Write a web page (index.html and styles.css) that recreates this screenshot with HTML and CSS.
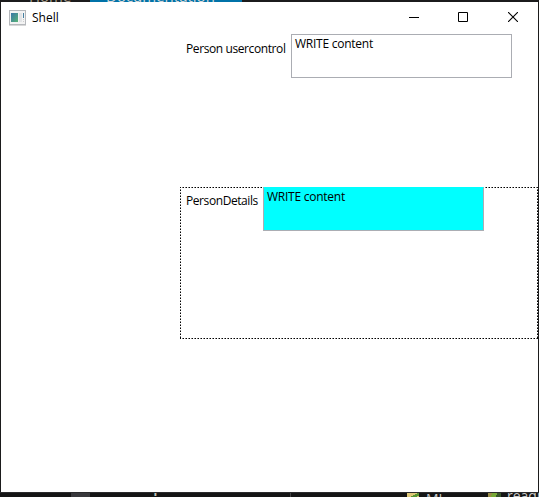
FILE: index.html
```html
<!DOCTYPE html>
<html lang="en">
<head>
<meta charset="utf-8">
<title>Shell</title>
<link rel="stylesheet" href="styles.css">
</head>
<body>
<div class="strip strip-top">
  <span class="nav-home">Home</span>
  <span class="nav-docs">Documentation</span>
</div>
<main class="window">
  <header class="titlebar">
    <svg class="app-icon" width="17" height="16" viewBox="0 0 17 16">
      <defs><linearGradient id="pane" x1="0" y1="0" x2="1" y2="1"><stop offset="0" stop-color="#3976a8"/><stop offset="1" stop-color="#59b477"/></linearGradient></defs>
      <rect x=".5" y=".5" width="16" height="14" fill="#f3f3f3" stroke="#b5b8bc"/>
      <path d="M0 15.5h17" stroke="#d8d8d8"/>
      <rect x="2" y="3" width="7" height="9" fill="url(#pane)"/>
      <rect x="10" y="3" width="3" height="9" fill="#e2e4e6"/>
      <rect x="14" y="3" width="1" height="5" fill="#447fa0"/>
      <path d="M14 9.500h1M14 11.500h1" stroke="#ccc"/>
    </svg>
    <h1 class="title">Shell</h1>
    <div class="controls">
      <svg width="10" height="10" viewBox="0 0 10 10"><path d="M0 5.500h10" stroke="#000"/></svg>
      <svg width="10" height="10" viewBox="0 0 10 10"><path d="M.5.5h9v9h-9z" fill="none" stroke="#000"/></svg>
      <svg width="10" height="10" viewBox="0 0 10 10"><path d="M0 0l10 10M10 0L0 10" stroke="#000" stroke-width="1.1"/></svg>
    </div>
  </header>
  <section class="region person">
    <span class="label label-person">Person usercontrol</span>
    <div class="box"><span class="content">WRITE content</span></div>
  </section>
  <section class="region details">
    <span class="label label-details">PersonDetails</span>
    <div class="box box-cyan"><span class="content">WRITE content</span></div>
  </section>
</main>
<div class="strip strip-bottom">
  <span class="tab"></span>
  <span class="tick"></span>
  <span class="divider"></span>
  <span class="folder"></span>
  <span class="file-ml">ML</span>
  <span class="leaf"></span>
  <span class="file-readme">readme</span>
</div>
</body>
</html>
```
FILE: styles.css
```css
* { box-sizing: border-box; }
body {
  margin: 0;
  width: 539px;
  height: 497px;
  overflow: hidden;
  background: #1b1b1c;
  color: #000;
  font: 12px/16px "Open Sans", "Noto Sans", sans-serif;
}
.strip { display: flex; overflow: hidden; color: #c8c8c8; }
.strip > * { flex: none; }
.strip-top { height: 2px; background: #1b1b1c; font-size: 15px; line-height: 20px; }
.nav-home { width: 61px; margin-left: 29px; margin-top: -14px; color: #aaa08f; }
.nav-docs { width: 152px; height: 20px; margin-top: -14px; padding-left: 16px; background: #0072a8; color: #d8d8d8; }
.window {
  width: 537px;
  height: 490px;
  margin-left: 1px;
  background: #fff;
}
.titlebar { display: flex; align-items: center; height: 32px; padding: 0 20px 2px 8px; }
.app-icon { margin-top: 1px; }
.title { margin: 2px 0 0 6px; font-size: 12px; font-weight: 400; letter-spacing: 0; }
.controls { display: flex; gap: 39px; margin-left: auto; }
.controls svg { display: block; }
.controls svg:nth-child(-n+2) { position: relative; left: -1px; }
.region { display: flex; align-items: flex-start; width: 358px; margin-left: 179px; }
.person { height: 153px; padding-left: 6px; }
.details {
  height: 152px;
  padding: 1px 1px 1px 6px;
  background:
    repeating-linear-gradient(90deg, #000 0 1px, #fff 1px 2px, #777 2px 3px) top / 100% 1px no-repeat,
    repeating-linear-gradient(90deg, #000 0 1px, #fff 1px 2px, #777 2px 3px) bottom / 100% 1px no-repeat,
    repeating-linear-gradient(#000 0 1px, #fff 1px 2px, #777 2px 3px) left / 1px 100% no-repeat,
    repeating-linear-gradient(#000 0 1px, #fff 1px 2px, #777 2px 3px) right / 1px 100% no-repeat;
}
.label { flex: none; white-space: nowrap; }
.label-person { width: 105px; margin-top: 7px; letter-spacing: -.4px; }
.label-details { width: 77px; margin-top: 5px; letter-spacing: -.42px; }
.box { width: 221px; height: 44px; padding: 1px 0 0 3px; border: 1px solid #abadb3; }
.box-cyan { margin-top: -1px; background: #0ff; border-top-color: transparent; }
.content { display: block; letter-spacing: -.25px; }
.strip-bottom { height: 5px; background: #151515; border-top: 1px solid #2b2b2d; font-size: 14px; line-height: 18px; }
.tab { width: 19px; height: 5px; margin-left: 71px; background: #38383c; }
.tick { width: 3px; height: 3px; margin-left: 64px; background: linear-gradient(90deg, #3c83a8 33%, #c8c0a8 33% 66%, #885630 66%); }
.divider { width: 1px; height: 5px; margin-left: 133px; background: #444; }
.folder { width: 12px; height: 5px; margin-left: 116px; background: linear-gradient(155deg, #dfc878 50%, #589532 50% 75%, #dfc878 75%); }
.file-ml { width: 62px; margin-left: 7px; margin-top: -3px; }
.leaf { width: 13px; height: 5px; background: linear-gradient(120deg, #998c46 30%, #77a936 30% 60%, #36542a 60%); }
.file-readme { margin-left: 6px; margin-top: -6px; }
```
